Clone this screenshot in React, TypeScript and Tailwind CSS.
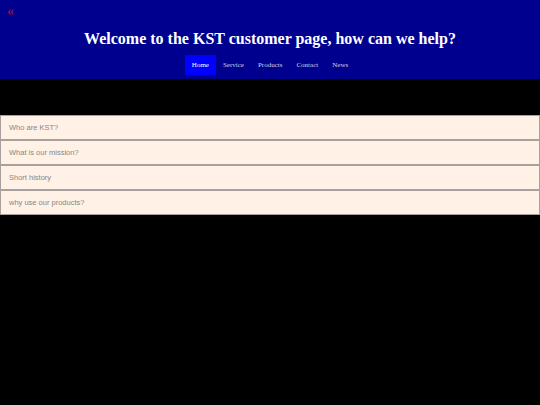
import { useState } from "react";

const links = ["Home", "Service", "Products", "Contact", "News"];
const questions = [
  "Who are KST?",
  "What is our mission?",
  "Short history",
  "why use our products?",
];

export default function App() {
  const [open, setOpen] = useState<number | null>(null);

  return (
    <div className="min-h-[405px] bg-black">
      <header className="bg-[#00008f] h-[79px] px-[7px] pt-[5px] font-['Liberation_Serif',serif]">
        <div className="text-[#b8103a] text-[14px] leading-[14px] h-[14px]">«</div>
        <h1 className="mt-[10px] text-center text-white font-bold text-[16px] leading-[20px]">
          Welcome to the KST customer page, how can we help?
        </h1>
        <nav className="mt-[6px] flex justify-center">
          {links.map((l, i) => (
            <a
              key={l}
              href="#"
              className={
                "px-[7px] h-[20px] flex items-center text-[7px] " +
                (i === 0 ? "bg-[#0000ff] text-white" : "text-[#d0d0e8]")
              }
            >
              {l}
            </a>
          ))}
        </nav>
      </header>

      <main className="pt-[36px]">
        {questions.map((q, i) => (
          <button
            key={q}
            onClick={() => setOpen(open === i ? null : i)}
            className="block w-full h-[25px] text-left px-[8px] bg-[#fff1e6] border border-[#a8a09c] text-[7.5px] text-[#8a8682] font-['Liberation_Sans',sans-serif]"
          >
            {q}
          </button>
        ))}
      </main>
    </div>
  );
}
